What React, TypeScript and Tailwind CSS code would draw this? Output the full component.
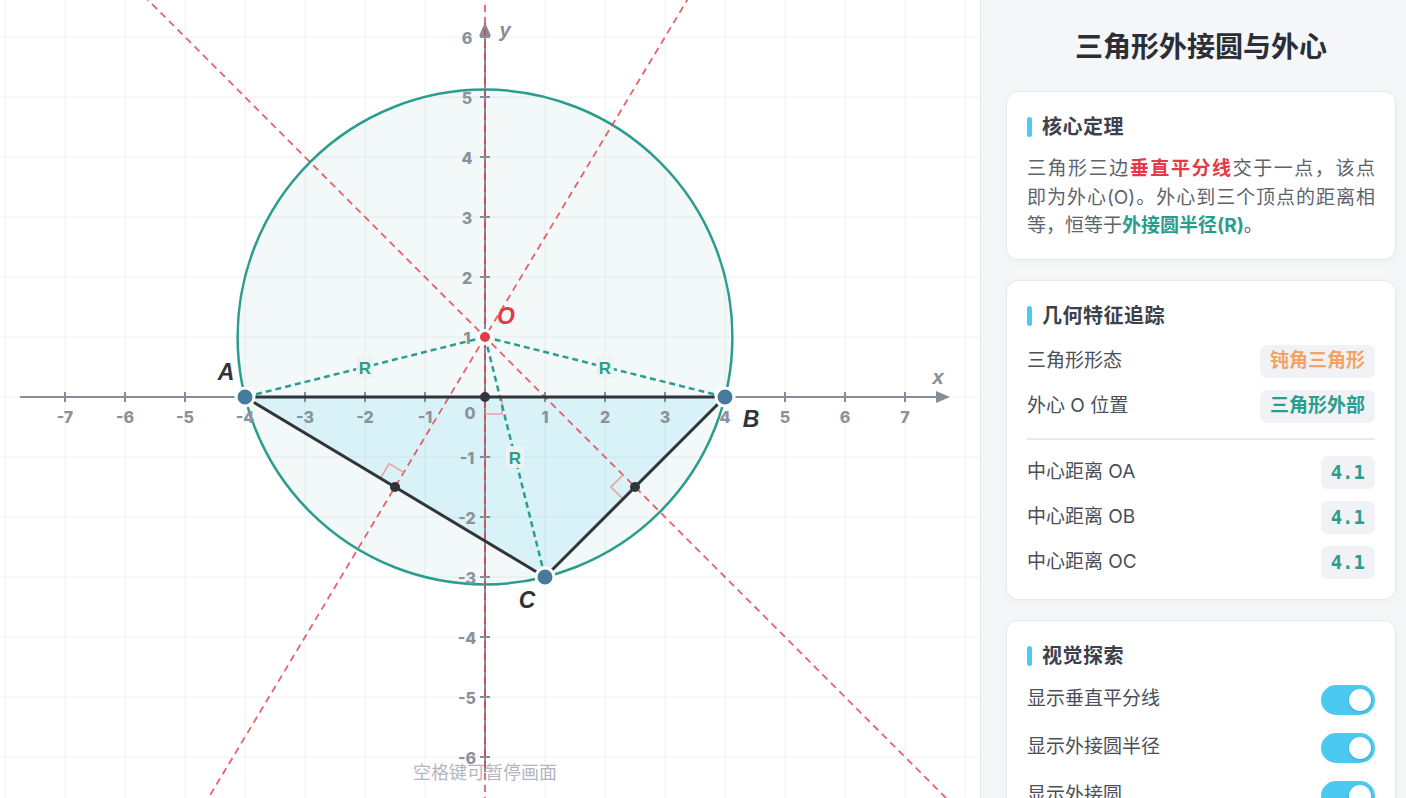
import React from 'react';

const U = 60;
const OX = 485;
const OY = 397;
const W = 980;
const H = 798;

type P = { x: number; y: number };
const sx = (x: number) => OX + x * U;
const sy = (y: number) => OY - y * U;
const toS = (p: P): P => ({ x: sx(p.x), y: sy(p.y) });

const A: P = { x: -4, y: 0 };
const B: P = { x: 4, y: 0 };
const C: P = { x: 1, y: -3 };
const O: P = { x: 0, y: 1 };
const R = Math.hypot(A.x - O.x, A.y - O.y);

const TEAL = '#2a9d8f';
const RED = '#e63946';
const DARK = '#31353b';
const AXIS = '#878d96';

function bisectorLine(p: P, q: P) {
  const a = toS(p);
  const b = toS(q);
  const m = { x: (a.x + b.x) / 2, y: (a.y + b.y) / 2 };
  const dx = b.x - a.x;
  const dy = b.y - a.y;
  const len = Math.hypot(dx, dy);
  const n = { x: -dy / len, y: dx / len };
  return { x1: m.x - n.x * 1400, y1: m.y - n.y * 1400, x2: m.x + n.x * 1400, y2: m.y + n.y * 1400, m };
}

// right angle marks: midpoint, unit along side, unit along bisector (screen coords)
function rightMark(m: P, u: P, v: P, s = 17) {
  const p1 = { x: m.x + u.x * s, y: m.y + u.y * s };
  const p2 = { x: p1.x + v.x * s, y: p1.y + v.y * s };
  const p3 = { x: m.x + v.x * s, y: m.y + v.y * s };
  return `M ${p1.x} ${p1.y} L ${p2.x} ${p2.y} L ${p3.x} ${p3.y}`;
}

function Board() {
  const gridX: number[] = [];
  for (let px = OX % U; px <= W; px += U) gridX.push(px);
  const gridY: number[] = [];
  for (let py = OY % U; py <= H; py += U) gridY.push(py);

  const a = toS(A);
  const b = toS(B);
  const c = toS(C);
  const o = toS(O);

  const bis = [bisectorLine(A, B), bisectorLine(A, C), bisectorLine(B, C)];

  const nAC = Math.hypot(a.x - 395, a.y - 487);
  const uAC = { x: (a.x - 395) / nAC, y: (a.y - 487) / nAC };
  const vAC = { x: -uAC.y, y: uAC.x };
  const marks = [
    rightMark({ x: OX, y: OY }, { x: 1, y: 0 }, { x: 0, y: 1 }),
    rightMark({ x: 395, y: 487 }, uAC, { x: Math.abs(vAC.x), y: -Math.abs(vAC.y) }),
    rightMark({ x: 635, y: 487 }, { x: -Math.SQRT1_2, y: Math.SQRT1_2 }, { x: -Math.SQRT1_2, y: -Math.SQRT1_2 }),
  ];

  const xTicks = [-7, -6, -5, -4, -3, -2, -1, 1, 2, 3, 4, 5, 6, 7];
  const yTicks = [-6, -5, -4, -3, -2, -1, 1, 2, 3, 4, 5, 6];

  const radii = [a, b, c].map((p) => ({ p, mx: (o.x + p.x) / 2, my: (o.y + p.y) / 2 }));

  return (
    <div className="relative h-full flex-1 overflow-hidden bg-white">
      <svg width={W} height={H} className="block" style={{ fontFamily: "'Liberation Sans', Arial, sans-serif" }}>
        {/* grid */}
        {gridX.map((x) => (
          <line key={'gx' + x} x1={x} y1={0} x2={x} y2={H} stroke="#eef0f3" strokeWidth={1} />
        ))}
        {gridY.map((y) => (
          <line key={'gy' + y} x1={0} y1={y} x2={W} y2={y} stroke="#eef0f3" strokeWidth={1} />
        ))}

        {/* circumcircle */}
        <circle cx={o.x} cy={o.y} r={R * U} fill="rgba(42,157,143,0.06)" stroke={TEAL} strokeWidth={2.5} />

        {/* triangle fill */}
        <polygon points={`${a.x},${a.y} ${b.x},${b.y} ${c.x},${c.y}`} fill="rgba(76,201,240,0.15)" />

        {/* axes */}
        <line x1={20} y1={OY} x2={938} y2={OY} stroke={AXIS} strokeWidth={2} />
        <polygon points={`950,${OY} 936,${OY - 6} 936,${OY + 6}`} fill={AXIS} />
        <line x1={OX} y1={34} x2={OX} y2={772} stroke={AXIS} strokeWidth={2} />
        <polygon points={`${OX},22 ${OX - 6},36 ${OX + 6},36`} fill={AXIS} />
        {xTicks.map((t) => (
          <line key={'tx' + t} x1={sx(t)} y1={OY - 5} x2={sx(t)} y2={OY + 5} stroke={AXIS} strokeWidth={2} />
        ))}
        {yTicks.map((t) => (
          <line key={'ty' + t} x1={OX - 5} y1={sy(t)} x2={OX + 5} y2={sy(t)} stroke={AXIS} strokeWidth={2} />
        ))}
        <g fill="#8b929b" fontSize={16} fontWeight={800} style={{ fontFamily: "Inter, 'Liberation Sans', sans-serif" }}>
          {xTicks.map((t) => (
            <text key={'lx' + t} x={sx(t)} y={417} textAnchor="middle" dominantBaseline="central">
              {t}
            </text>
          ))}
          {yTicks.map((t) => (
            <text key={'ly' + t} x={467} y={sy(t) + 1} textAnchor="middle" dominantBaseline="central">
              {t}
            </text>
          ))}
          <text x={470} y={413} textAnchor="middle" dominantBaseline="central">
            0
          </text>
        </g>
        <text x={938} y={377} fill={AXIS} fontSize={20} fontWeight={700} fontStyle="italic" textAnchor="middle" dominantBaseline="central">
          x
        </text>
        <text x={505} y={30} fill={AXIS} fontSize={20} fontWeight={700} fontStyle="italic" textAnchor="middle" dominantBaseline="central">
          y
        </text>

        {/* perpendicular bisectors */}
        {bis.map((l, i) => (
          <line key={'b' + i} x1={l.x1} y1={l.y1} x2={l.x2} y2={l.y2} stroke={RED} strokeOpacity={0.8} strokeWidth={1.8} strokeDasharray="7 5" />
        ))}
        {marks.map((d, i) => (
          <path key={'m' + i} d={d} fill="none" stroke="#eba1a6" strokeWidth={1.6} />
        ))}

        {/* radii */}
        {radii.map((r, i) => (
          <line key={'r' + i} x1={o.x} y1={o.y} x2={r.p.x} y2={r.p.y} stroke={TEAL} strokeWidth={2.5} strokeDasharray="6 4" />
        ))}

        {/* triangle edges */}
        <polygon points={`${a.x},${a.y} ${b.x},${b.y} ${c.x},${c.y}`} fill="none" stroke={DARK} strokeWidth={3} strokeLinejoin="round" />

        {/* midpoints */}
        {bis.map((l, i) => (
          <circle key={'mp' + i} cx={l.m.x} cy={l.m.y} r={5} fill={DARK} />
        ))}

        {/* R labels */}
        {radii.map((r, i) => (
          <g key={'rl' + i}>
            <rect x={r.mx - 9} y={r.my - 11} width={18} height={22} rx={3} fill="rgba(240,243,240,0.92)" />
            <text x={r.mx} y={r.my + 1} fill={TEAL} fontSize={17} fontWeight={700} textAnchor="middle" dominantBaseline="central">
              R
            </text>
          </g>
        ))}

        {/* vertices */}
        {[a, b, c].map((p, i) => (
          <circle key={'v' + i} cx={p.x} cy={p.y} r={9} fill="#457b9d" stroke="#fff" strokeWidth={3} />
        ))}
        <circle cx={o.x} cy={o.y} r={6.5} fill={RED} stroke="#fff" strokeWidth={3} />

        <g fontSize={23} fontWeight={700} fontStyle="italic" textAnchor="middle" dominantBaseline="central">
          <text x={226} y={372} fill={DARK}>A</text>
          <text x={751} y={419} fill={DARK}>B</text>
          <text x={527} y={600} fill={DARK}>C</text>
          <text x={506} y={316} fill={RED}>O</text>
        </g>
      </svg>
      <div className="absolute left-[485px] top-[760px] -translate-x-1/2 whitespace-nowrap font-['Inter','Noto_Sans_CJK_SC',sans-serif] text-[18px] leading-[26px] text-[#b3b7bd]">
        空格键可暂停画面
      </div>
    </div>
  );
}

function CardTitle({ children }: { children: React.ReactNode }) {
  return (
    <div className="flex h-[28px] items-center">
      <span className="h-[20px] w-[5px] rounded-full bg-[#4cc9f0]" />
      <span className="ml-[10px] text-[20px] font-bold leading-[28px] tracking-[0.5px] text-[#3c414b]">{children}</span>
    </div>
  );
}

function Card({ children, className = '' }: { children: React.ReactNode; className?: string }) {
  return (
    <div className={`rounded-[12px] border border-[#e6e8ec] bg-white px-[20px] pt-[21px] shadow-[0_2px_8px_rgba(30,40,60,0.03)] ${className}`}>
      {children}
    </div>
  );
}

function Badge({ children, color, mono }: { children: React.ReactNode; color: string; mono?: boolean }) {
  return (
    <span
      className={`flex h-[33px] items-center rounded-[7px] bg-[#f0f2f5] px-[10px] text-[19px] font-bold ${mono ? "font-['DejaVu_Sans_Mono',monospace] text-[18px]" : ''}`}
      style={{ color }}
    >
      {children}
    </span>
  );
}

function Row({ label, children }: { label: string; children: React.ReactNode }) {
  return (
    <div className="flex h-[33px] items-center justify-between">
      <span className="text-[19px] text-[#4a4f59]">{label}</span>
      {children}
    </div>
  );
}

function Toggle({ label }: { label: string }) {
  return (
    <div className="flex h-[30px] items-center justify-between">
      <span className="text-[19px] text-[#4a4f59]">{label}</span>
      <span className="relative flex h-[30px] w-[54px] items-center justify-end rounded-full bg-[#4cc9f0] pr-[4px]">
        <span className="h-[22px] w-[22px] rounded-full bg-white shadow-[0_1px_3px_rgba(0,0,0,0.2)]" />
      </span>
    </div>
  );
}

function Sidebar() {
  return (
    <aside className="h-full w-[426px] shrink-0 overflow-hidden border-l border-[#e3e6ea] bg-[#f4f6f8] pl-[25px] pr-[10px] pt-[28px] font-['Inter','Noto_Sans_CJK_SC',sans-serif]">
      <h1 className="mb-[25px] text-center text-[28px] font-bold leading-[38px] text-[#2b2e35]">三角形外接圆与外心</h1>

      <Card className="pb-[18px]">
        <CardTitle>核心定理</CardTitle>
        <p className="mt-[14px] text-[19px] leading-[28.5px] text-[#5d636d]">
          <span className="block text-justify [text-align-last:justify]">
            三角形三边<b className="font-bold text-[#e63946]">垂直平分线</b>交于一点，该点
          </span>
          <span className="block text-justify [text-align-last:justify]">即为外心(O)。外心到三个顶点的距离相</span>
          <span className="block">
            等，恒等于<b className="font-bold text-[#2a9d8f]">外接圆半径(R)</b>。
          </span>
        </p>
      </Card>

      <Card className="mt-[20px] pb-[20px]">
        <CardTitle>几何特征追踪</CardTitle>
        <div className="mt-[15px] flex flex-col gap-[12px]">
          <Row label="三角形形态">
            <Badge color="#f4a261">钝角三角形</Badge>
          </Row>
          <Row label="外心 O 位置">
            <Badge color="#2a9d8f">三角形外部</Badge>
          </Row>
        </div>
        <div className="mb-[16px] mt-[15px] h-[2px] bg-[#e8e8ee]" />
        <div className="flex flex-col gap-[12px]">
          <Row label="中心距离 OA">
            <Badge color="#2a9d8f" mono>
              4.1
            </Badge>
          </Row>
          <Row label="中心距离 OB">
            <Badge color="#2a9d8f" mono>
              4.1
            </Badge>
          </Row>
          <Row label="中心距离 OC">
            <Badge color="#2a9d8f" mono>
              4.1
            </Badge>
          </Row>
        </div>
      </Card>

      <Card className="mt-[20px] pb-[20px]">
        <CardTitle>视觉探索</CardTitle>
        <div className="mt-[15px] flex flex-col gap-[18px]">
          <Toggle label="显示垂直平分线" />
          <Toggle label="显示外接圆半径" />
          <Toggle label="显示外接圆" />
        </div>
      </Card>
    </aside>
  );
}

export default function App() {
  return (
    <div className="flex h-screen w-full overflow-hidden bg-white">
      <Board />
      <Sidebar />
    </div>
  );
}
